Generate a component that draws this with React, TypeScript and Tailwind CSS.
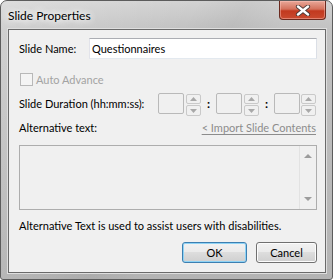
import React from "react";

const font = { fontFamily: "Lato, 'Noto Sans', sans-serif" };

function Spinner() {
  return (
    <div className="flex flex-col gap-[1px] h-[22px] w-[15px]">
      <div className="h-[10px] border border-[#c9c9c9] rounded-[2px] bg-[#f0f0f0] flex items-center justify-center">
        <svg width="7" height="4" viewBox="0 0 7 4"><path d="M3.5 0L7 4H0z" fill="#a8a8a8" /></svg>
      </div>
      <div className="h-[11px] border border-[#c9c9c9] rounded-[2px] bg-[#f0f0f0] flex items-center justify-center">
        <svg width="7" height="4" viewBox="0 0 7 4"><path d="M0 0H7L3.5 4z" fill="#a8a8a8" /></svg>
      </div>
    </div>
  );
}

function TimeBox() {
  return <div className="w-[26px] h-[21px] border border-[#b9b9b9] rounded-[2px] bg-[#f0f0f0]" />;
}

function Colon() {
  return (
    <div className="w-[15px] h-[21px] flex items-center justify-center text-[12px] font-bold leading-none text-black">:</div>
  );
}

export default function App() {
  return (
    <div
      className="w-[333px] h-[280px] relative overflow-hidden rounded-t-[7px] rounded-b-[3px] border border-[#5c5c5c] bg-[linear-gradient(to_bottom,#d2d2d2,#c2c2c2_28px,#b3b3b3)] flex flex-col pl-[7px] pr-[6px] pb-[6px] text-black"
      style={font}
    >
      {/* subtle glare */}
      <div className="absolute inset-0 pointer-events-none bg-[linear-gradient(120deg,rgba(255,255,255,0.25)_0%,rgba(255,255,255,0)_40%,rgba(0,0,0,0.04)_50%,rgba(255,255,255,0)_60%)]" />
      {/* title bar */}
      <div className="h-[28px] flex items-center relative">
        <span className="text-[12px] leading-none mt-[1px] [text-shadow:0_0_6px_#fff,0_0_10px_#fff,0_0_14px_#fff]">
          Slide Properties
        </span>
        <div className="absolute right-[0px] top-[0px] w-[47px] h-[19px] rounded-b-[4px] border border-t-0 border-[#6b2a1f] bg-[linear-gradient(to_bottom,#e9a899,#d4715c_45%,#c2391f_55%,#c94a2f)] flex items-center justify-center shadow-[inset_0_0_0_1px_rgba(255,200,190,0.45)]">
          <svg width="16" height="11" viewBox="0 0 16 11">
            <path d="M3 1.5L13 9.5M13 1.5L3 9.5" stroke="#4a3a38" strokeWidth="4.2" strokeLinecap="round" />
            <path d="M3 1.5L13 9.5M13 1.5L3 9.5" stroke="#ffffff" strokeWidth="2.4" strokeLinecap="round" />
          </svg>
        </div>
      </div>
      {/* content */}
      <div className="relative flex-1 border border-[#6a6a6a] bg-[#f0f0f0] shadow-[0_0_0_1px_#dedede] flex flex-col pl-[10px] pr-[8px] text-[11px] leading-none">
        {/* Slide name */}
        <div className="mt-[8px] h-[21px] flex items-center">
          <span className="w-[70px]">Slide Name:</span>
          <div className="flex-1 h-[21px] border border-[#abadb3] border-r-[#dbdfe6] border-b-[#e3e9ef] border-l-[#e2e3ea] bg-white flex items-center pl-[2px]">
            Questionnaires
          </div>
        </div>
        {/* Auto advance */}
        <div className="mt-[14px] h-[13px] flex items-center">
          <div className="ml-[1px] w-[13px] h-[13px] border border-[#b8b8b8] bg-[#f4f4f4]" />
          <span className="ml-[3px] text-[#a3a3a3]">Auto Advance</span>
        </div>
        {/* Duration */}
        <div className="mt-[7px] h-[22px] flex items-start">
          <span className="w-[139px] h-[21px] flex items-center">Slide Duration (hh:mm:ss):</span>
          <TimeBox />
          <div className="ml-[2px] mt-[1px]"><Spinner /></div>
          <Colon />
          <TimeBox />
          <div className="ml-[2px] mt-[1px]"><Spinner /></div>
          <Colon />
          <TimeBox />
          <div className="ml-[1px] mt-[1px]"><Spinner /></div>
        </div>
        {/* Alt text label */}
        <div className="mt-[4px] h-[16px] flex items-center justify-between">
          <span>Alternative text:</span>
          <span className="text-[#8c8c8c] underline underline-offset-[2px] mr-[1px]">&lt; Import Slide Contents</span>
        </div>
        {/* textarea */}
        <div className="mt-[10px] h-[65px] border border-[#adadad] bg-[#f0f0f0] flex justify-end">
          <div className="w-[17px] h-full border-l border-[#e2e2e2] flex flex-col items-center justify-between py-[8px] bg-[#f0f0f0]">
            <svg width="8" height="4" viewBox="0 0 8 4"><path d="M4 0L8 4H0z" fill="#9c9c9c" /></svg>
            <svg width="8" height="4" viewBox="0 0 8 4"><path d="M0 0H8L4 4z" fill="#9c9c9c" /></svg>
          </div>
        </div>
        {/* info */}
        <div className="mt-[7px] h-[16px] flex items-center">
          Alternative Text is used to assist users with disabilities.
        </div>
        {/* buttons */}
        <div className="mt-[9px] flex justify-end gap-[9px]">
          <button className="w-[65px] h-[21px] rounded-[3px] border border-[#3c7fb1] bg-[linear-gradient(to_bottom,#f2f2f2,#ebebeb_45%,#dddddd_50%,#cfcfcf)] shadow-[inset_0_0_0_1px_#8fd3f5] text-[11px] leading-none flex items-center justify-center">
            OK
          </button>
          <button className="w-[61px] h-[21px] rounded-[3px] border border-[#707070] bg-[linear-gradient(to_bottom,#f2f2f2,#ebebeb_45%,#dddddd_50%,#cfcfcf)] shadow-[inset_0_0_0_1px_#fcfcfc] text-[11px] leading-none flex items-center justify-center">
            Cancel
          </button>
        </div>
      </div>
    </div>
  );
}
